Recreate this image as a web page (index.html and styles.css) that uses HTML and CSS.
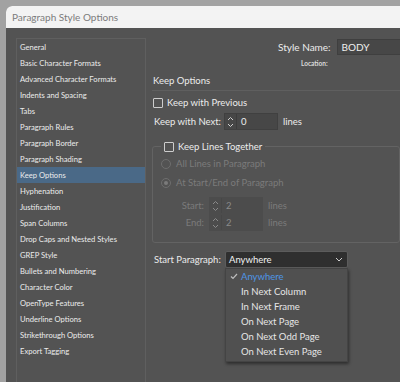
FILE: index.html
```html
<!DOCTYPE html>
<html>
<head>
  <title>Paragraph Style Options</title>
  <meta name="viewport" content="width=device-width, initial-scale=1">
  <link rel="stylesheet" href="styles.css">
</head>
<body>
  <div class="desk">
    <div class="window">
      <div class="titlebar">Paragraph Style Options</div>
      <div class="dialog">
        <ul class="nav">
          <li>General</li>
          <li>Basic Character Formats</li>
          <li>Advanced Character Formats</li>
          <li>Indents and Spacing</li>
          <li>Tabs</li>
          <li>Paragraph Rules</li>
          <li>Paragraph Border</li>
          <li>Paragraph Shading</li>
          <li class="active">Keep Options</li>
          <li>Hyphenation</li>
          <li>Justification</li>
          <li>Span Columns</li>
          <li>Drop Caps and Nested Styles</li>
          <li>GREP Style</li>
          <li>Bullets and Numbering</li>
          <li>Character Color</li>
          <li>OpenType Features</li>
          <li>Underline Options</li>
          <li>Strikethrough Options</li>
          <li>Export Tagging</li>
        </ul>
        <div class="main">
          <div class="name-row">
            <span>Style Name:</span>
            <div class="textbox">BODY</div>
          </div>
          <div class="location">Location:</div>
          <h2 class="section">Keep Options</h2>
          <label class="check-row"><span class="checkbox"></span>Keep with Previous</label>
          <div class="field-row">
            <span class="label">Keep with Next:</span>
            <div class="spinner"><span class="arrows"><svg width="7" height="12" viewBox="0 0 7 12"><path d="M1 4 L3.5 1.5 L6 4 M1 8 L3.5 10.5 L6 8" fill="none" stroke="#cfcfcf" stroke-width="1"/></svg></span><span class="value">0</span></div>
            <span class="unit">lines</span>
          </div>
          <fieldset class="group">
            <legend><span class="checkbox"></span>Keep Lines Together</legend>
            <div class="radio-row"><span class="radio"></span>All Lines in Paragraph</div>
            <div class="radio-row"><span class="radio on"></span>At Start/End of Paragraph</div>
            <div class="sub-rows">
              <div class="sub-row">
                <span class="sub-label">Start:</span>
                <div class="spinner dim"><span class="arrows"><svg width="7" height="12" viewBox="0 0 7 12"><path d="M1 4 L3.5 1.5 L6 4 M1 8 L3.5 10.5 L6 8" fill="none" stroke="#8a8a8a" stroke-width="1"/></svg></span><span class="value">2</span></div>
                <span class="unit">lines</span>
              </div>
              <div class="sub-row">
                <span class="sub-label">End:</span>
                <div class="spinner dim"><span class="arrows"><svg width="7" height="12" viewBox="0 0 7 12"><path d="M1 4 L3.5 1.5 L6 4 M1 8 L3.5 10.5 L6 8" fill="none" stroke="#8a8a8a" stroke-width="1"/></svg></span><span class="value">2</span></div>
                <span class="unit">lines</span>
              </div>
            </div>
          </fieldset>
          <div class="start-row">
            <span class="label">Start Paragraph:</span>
            <div class="select-wrap">
              <div class="select">Anywhere<svg width="8" height="5" viewBox="0 0 8 5"><path d="M1 1 L4 4 L7 1" fill="none" stroke="#d0d0d0" stroke-width="1"/></svg></div>
              <ul class="menu">
                <li class="picked"><svg class="tick" width="8" height="7" viewBox="0 0 8 7"><path d="M1 3.5 L3 5.5 L7 1" fill="none" stroke="#bdbdbd" stroke-width="1.2"/></svg>Anywhere</li>
                <li>In Next Column</li>
                <li>In Next Frame</li>
                <li>On Next Page</li>
                <li>On Next Odd Page</li>
                <li>On Next Even Page</li>
              </ul>
            </div>
          </div>
        </div>
      </div>
    </div>
  </div>
</body>
</html>
```

FILE: styles.css
```css
html {
  font-family: Lato, "Noto Sans", Arial, sans-serif;
  overflow: hidden;
}
body {
  margin: 0;
  background-color: #a2a2a2;
}
.desk {
  height: 382px;
  padding: 6px 0 0 6px;
  box-sizing: border-box;
}
.window {
  width: 394px;
  height: 376px;
  background-color: #535353;
  border-top-left-radius: 6px;
  overflow: hidden;
  white-space: nowrap;
}
.titlebar {
  height: 22px;
  line-height: 22px;
  padding-left: 6px;
  background-color: #f3f3f3;
  color: #7c7c7c;
  font-size: 10px;
}
.dialog {
  display: flex;
  padding: 10px 0 0 10px;
}
.nav {
  list-style: none;
  margin: 0;
  padding: 0;
  width: 128px;
  flex-shrink: 0;
  height: 360px;
  border: 1px solid #5f5f5f;
  border-bottom: none;
}
.nav li {
  height: 16px;
  line-height: 16px;
  padding-left: 3px;
  font-size: 7.6px;
  color: #ececec;
}
.nav li.active {
  background-color: #4a6987;
}
.main {
  flex: 1;
  min-width: 0;
  padding-left: 6px;
  color: #ececec;
  font-size: 9px;
}
.name-row {
  display: flex;
  align-items: center;
  gap: 6px;
  margin-top: 1px;
  padding-left: 126px;
  font-size: 10px;
}
.textbox {
  width: 100px;
  flex-shrink: 0;
  height: 14px;
  line-height: 14px;
  padding-left: 4px;
  background-color: #474747;
  border: 1px solid #3f3f3f;
  color: #f0f0f0;
}
.location {
  padding-left: 149px;
  margin-top: 5px;
  font-size: 6.5px;
  font-weight: bold;
  color: #dadada;
}
.section {
  margin: 8px 0 0 0;
  padding: 0 0 4px 1px;
  font-size: 9.5px;
  font-weight: normal;
  border-bottom: 1px solid #5f5f5f;
}
.check-row {
  display: flex;
  align-items: center;
  gap: 4px;
  margin-top: 6px;
  padding-left: 1px;
  font-size: 9.5px;
}
.checkbox {
  display: inline-block;
  width: 8px;
  height: 8px;
  border: 1px solid #cdcdcd;
  border-radius: 1px;
}
.field-row {
  display: flex;
  align-items: center;
  margin-top: 5px;
  padding-left: 2px;
  font-size: 9.5px;
}
.field-row .label {
  width: 70px;
}
.spinner {
  display: flex;
  align-items: center;
  width: 52px;
  height: 15px;
  background-color: #474747;
  border: 1px solid #404040;
}
.arrows {
  display: flex;
  align-items: center;
  justify-content: center;
  width: 11px;
  height: 15px;
  border-right: 1px solid #3c3c3c;
}
.value {
  padding-left: 4px;
  color: #eeeeee;
}
.unit {
  margin-left: 5px;
}
.group {
  margin: 11px 0 0 0;
  padding: 2px 0 0 8px;
  border: 1px solid #636363;
  border-radius: 3px;
  height: 102px;
  box-sizing: border-box;
}
.group legend {
  display: flex;
  align-items: center;
  gap: 4px;
  padding: 0 3px;
  margin-left: 0;
  font-size: 9.5px;
}
.radio-row {
  display: flex;
  align-items: center;
  gap: 5px;
  height: 19px;
  color: #7b7b7b;
  font-size: 9.5px;
}
.radio {
  width: 8px;
  height: 8px;
  border: 1px solid #6e6e6e;
  border-radius: 50%;
  position: relative;
}
.radio.on::after {
  content: "";
  position: absolute;
  left: 2px;
  top: 2px;
  width: 4px;
  height: 4px;
  border-radius: 50%;
  background-color: #7b7b7b;
}
.sub-rows {
  margin-top: 5px;
}
.sub-row {
  display: flex;
  align-items: center;
  height: 17px;
  color: #7b7b7b;
  font-size: 9.5px;
}
.sub-label {
  width: 43px;
  padding-right: 5px;
  text-align: right;
}
.spinner.dim {
  background-color: #4c4c4c;
  border-color: #4c4c4c;
}
.spinner.dim .arrows {
  border-right-color: #474747;
}
.spinner.dim .value {
  color: #8a8a8a;
}
.start-row {
  display: flex;
  align-items: flex-start;
  margin-top: 8px;
  padding-left: 2px;
  font-size: 9.5px;
}
.start-row .label {
  width: 71px;
  line-height: 17px;
}
.select-wrap {
  width: 123px;
}
.select {
  display: flex;
  justify-content: space-between;
  align-items: center;
  height: 15px;
  padding: 0 4px 0 3px;
  background-color: #2f2f2f;
  border: 1px solid #5c5c5c;
  border-radius: 2px;
  color: #f2f2f2;
}
.menu {
  list-style: none;
  margin: 0;
  padding: 0 0 2px 0;
  background-color: #505050;
  border: 1px solid #444444;
  box-shadow: 1px 2px 3px rgba(0,0,0,.45);
}
.menu li {
  height: 15px;
  line-height: 15px;
  padding-left: 15px;
  position: relative;
  color: #e6e6e6;
}
.menu li.picked {
  color: #4e95e6;
}
.tick {
  position: absolute;
  left: 4px;
  top: 4px;
}
```
